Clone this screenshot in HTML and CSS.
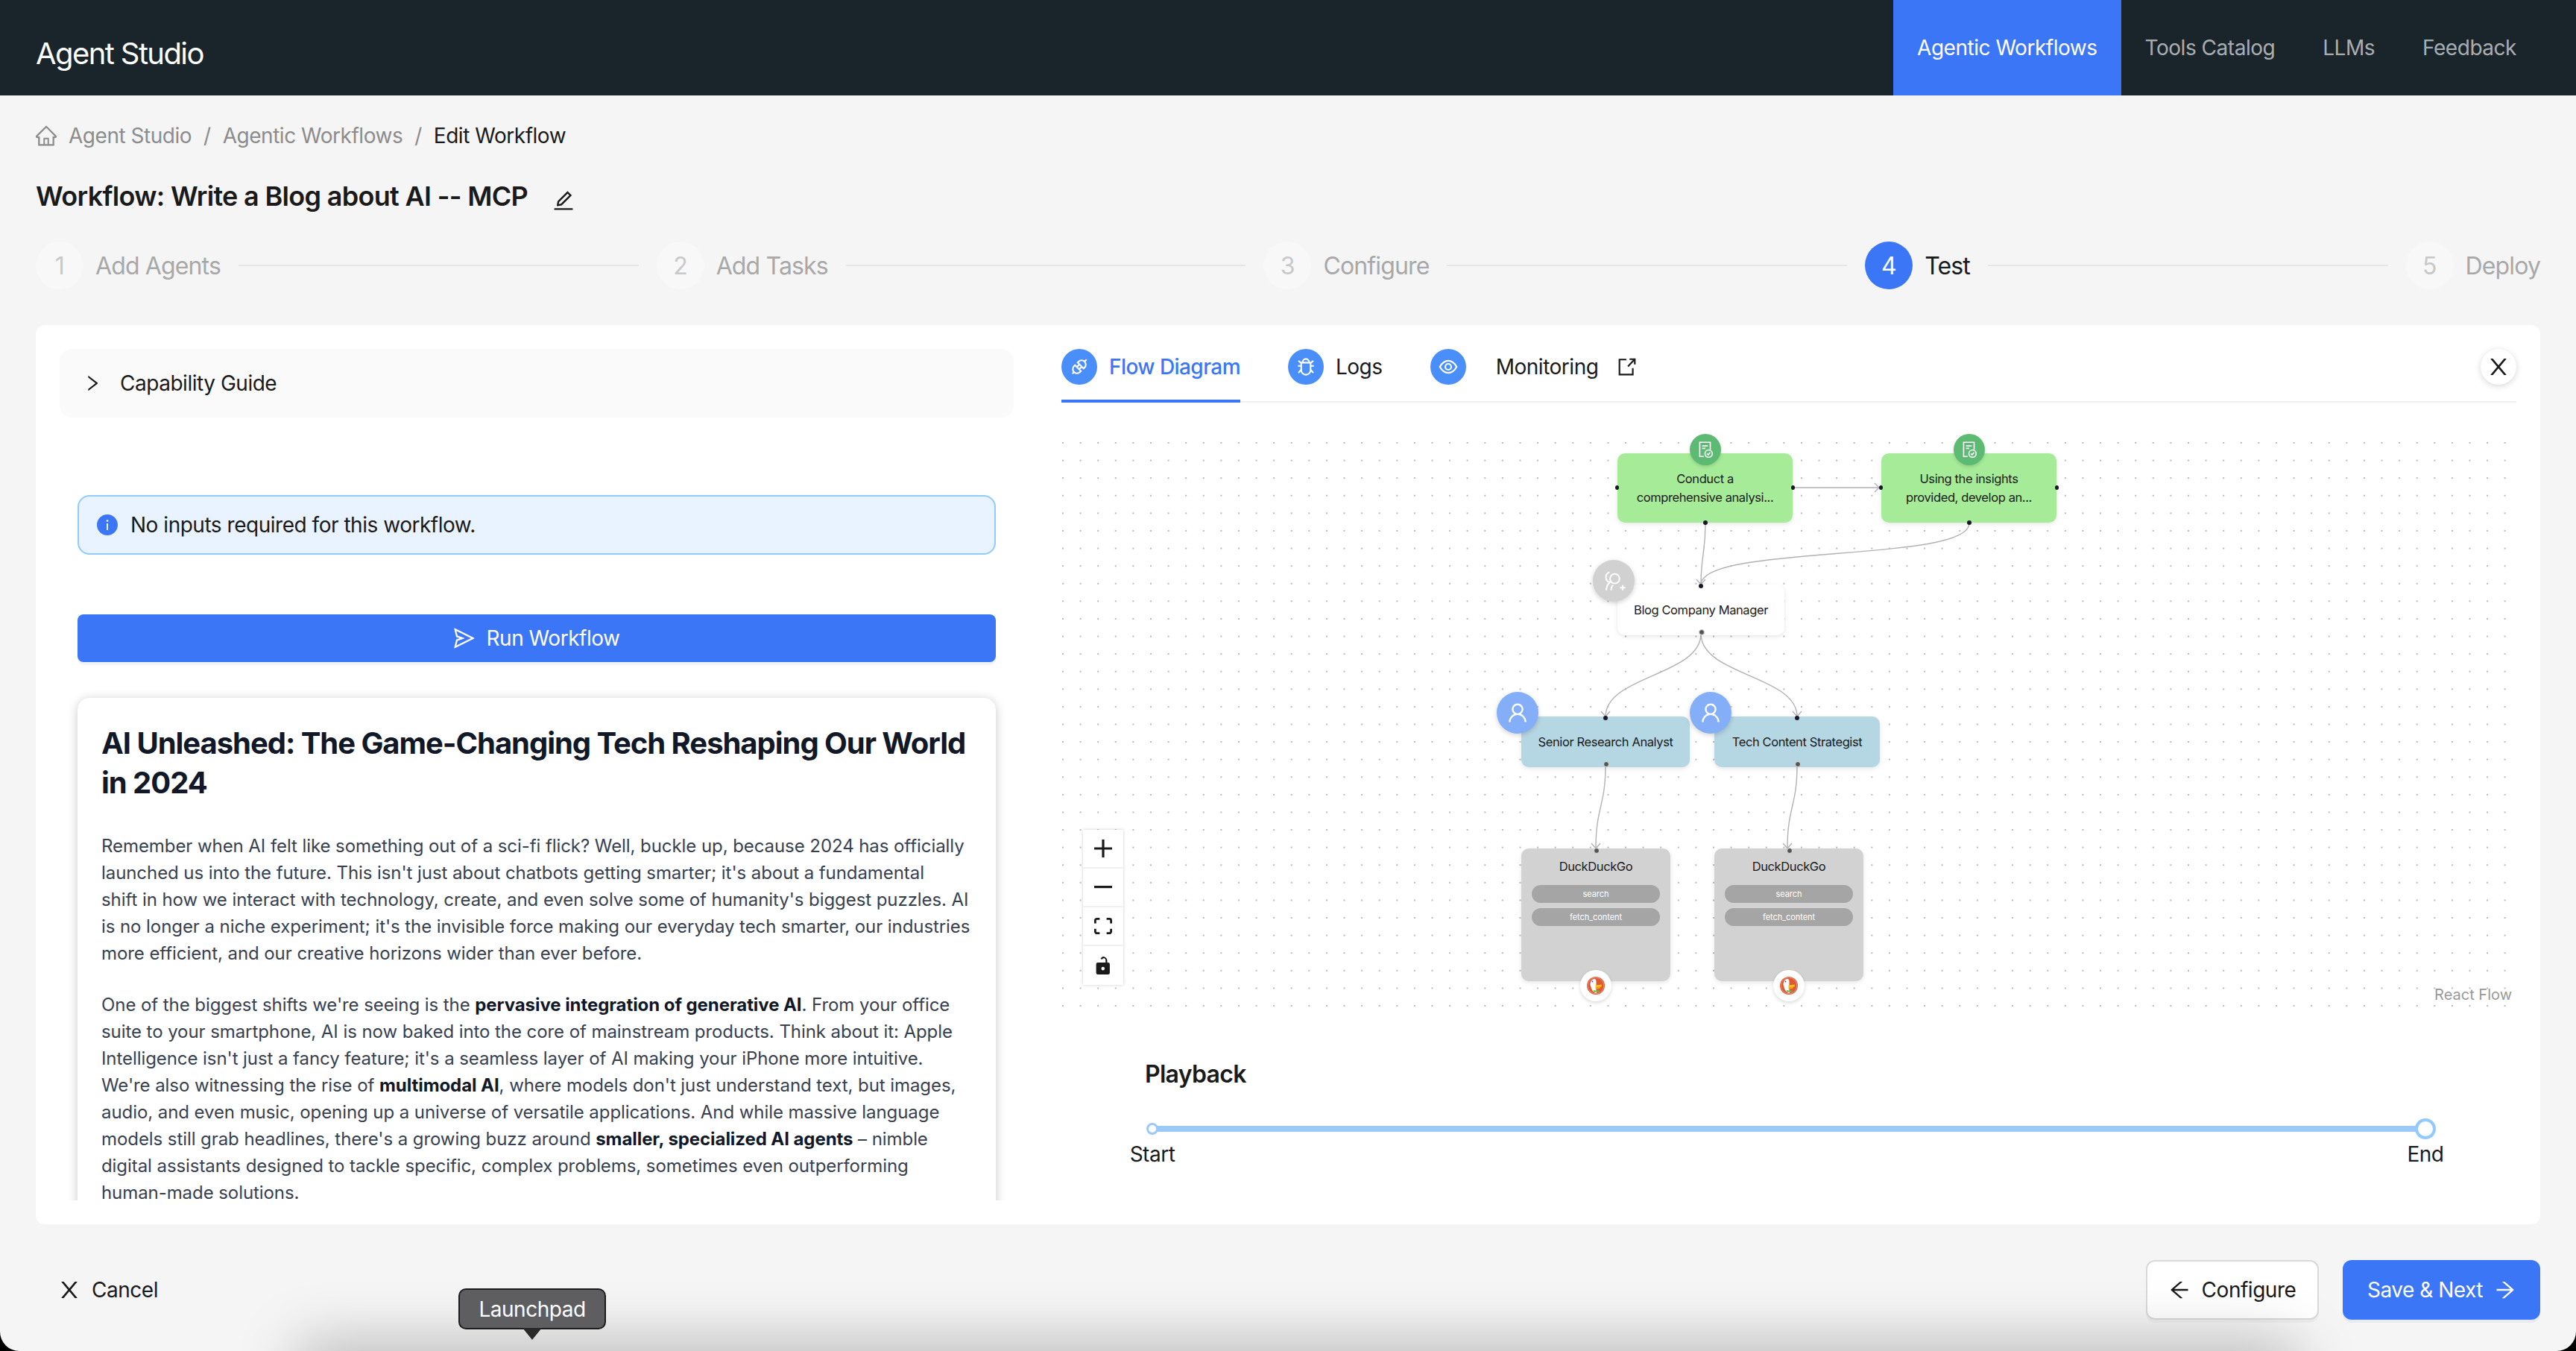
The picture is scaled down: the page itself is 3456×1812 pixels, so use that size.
FILE: index.html
```html
<!DOCTYPE html>
<html lang="en">
<head>
  <meta charset="UTF-8" />
  <title>Agent Studio</title>
  <link rel="stylesheet" href="styles.css">
</head>
<body>
  <header class="topbar">
    <div class="brand">Agent Studio</div>
    <nav class="topnav">
      <a class="topnav-item active">Agentic Workflows</a>
      <a class="topnav-item">Tools Catalog</a>
      <a class="topnav-item">LLMs</a>
      <a class="topnav-item">Feedback</a>
    </nav>
  </header>

  <main class="page">
    <div class="breadcrumb">
      <svg class="crumb-home" viewBox="64 64 896 896"><path d="M946.5 505L560.1 118.8l-25.9-25.9a31.5 31.5 0 00-44.4 0L77.5 505a63.9 63.9 0 00-18.8 46c.4 35.2 29.7 63.3 64.9 63.3h42.5V940h691.8V614.3h43.4c17.1 0 33.2-6.7 45.3-18.8a63.6 63.6 0 0018.7-45.3c0-17-6.7-33.1-18.8-45.2zM568 868H456V664h112v204zm217.9-325.7V868H632V640c0-22.1-17.9-40-40-40H432c-22.1 0-40 17.9-40 40v228H238.1V542.3h-96l370-369.7 23.1 23.1L882 542.3h-96.1z"/></svg>
      <span>Agent Studio</span>
      <span class="crumb-sep">/</span>
      <span>Agentic Workflows</span>
      <span class="crumb-sep">/</span>
      <span class="crumb-current">Edit Workflow</span>
    </div>

    <div class="title-row">
      <h1 class="page-title">Workflow: Write a Blog about AI -- MCP</h1>
      <svg class="edit-icon" viewBox="64 64 896 896"><path d="M257.7 752c2 0 4-.2 6-.5L431.9 722c2-.4 3.9-1.3 5.3-2.8l423.9-423.9a9.96 9.96 0 000-14.1L694.9 114.9c-1.9-1.9-4.4-2.9-7.1-2.9s-5.2 1-7.1 2.9L256.8 538.8c-1.5 1.5-2.4 3.3-2.8 5.3l-29.5 168.2a33.5 33.5 0 009.4 29.8c6.6 6.4 14.9 9.9 23.8 9.9zm67.4-174.4L687.8 215l73.3 73.3-362.7 362.6-88.9 15.7 15.6-89zM880 836H144c-17.7 0-32 14.3-32 32v36c0 4.4 3.6 8 8 8h784c4.4 0 8-3.6 8-8v-36c0-17.7-14.3-32-32-32z"/></svg>
    </div>

    <div class="steps">
      <div class="step"><span class="step-num">1</span><span class="step-label">Add Agents</span></div>
      <div class="step-line"></div>
      <div class="step"><span class="step-num">2</span><span class="step-label">Add Tasks</span></div>
      <div class="step-line"></div>
      <div class="step"><span class="step-num">3</span><span class="step-label">Configure</span></div>
      <div class="step-line"></div>
      <div class="step current"><span class="step-num">4</span><span class="step-label">Test</span></div>
      <div class="step-line"></div>
      <div class="step"><span class="step-num">5</span><span class="step-label">Deploy</span></div>
    </div>

    <section class="card">
      <div class="left-col">
        <div class="guide">
          <svg class="guide-arrow" viewBox="64 64 896 896"><path d="M765.7 486.8L314.9 134.7A7.97 7.97 0 00302 141v77.3c0 4.9 2.3 9.6 6.1 12.6l360 281.1-360 281.1c-3.9 3-6.1 7.7-6.1 12.6V883c0 6.7 7.7 10.4 12.9 6.3l450.8-352.1a31.96 31.96 0 000-50.4z"/></svg>
          <span>Capability Guide</span>
        </div>

        <div class="run-area">
          <div class="alert">
            <svg class="alert-icon" viewBox="64 64 896 896"><path d="M512 64C264.6 64 64 264.6 64 512s200.6 448 448 448 448-200.6 448-448S759.4 64 512 64zm32 664c0 4.4-3.6 8-8 8h-48c-4.4 0-8-3.6-8-8V456c0-4.4 3.6-8 8-8h48c4.4 0 8 3.6 8 8v272zm-32-344a48.01 48.01 0 010-96 48.01 48.01 0 010 96z"/></svg>
            <span>No inputs required for this workflow.</span>
          </div>

          <button class="run-btn">
            <svg class="run-icon" viewBox="64 64 896 896"><path d="M931.4 498.9L94.9 79.5c-3.4-1.7-7.3-2.1-11-1.2a15.99 15.99 0 00-11.7 19.3l86.2 352.2c1.3 5.3 5.2 9.6 10.4 11.3l147.7 50.7-147.6 50.7c-5.2 1.8-9.1 6-10.3 11.3L72.2 926.5c-.9 3.7-.5 7.6 1.2 10.9 3.9 7.9 13.5 11.1 21.5 7.2l836.5-417c3.1-1.5 5.6-4.1 7.2-7.1 3.9-8 .7-17.6-7.2-21.6zM170.8 826.3l50.3-205.6 295.2-101.3c2.3-.8 4.2-2.6 5-5 1.4-4.2-.8-8.7-5-10.2L221.1 403 171 198.2l628 314.9-628.2 313.2z"/></svg>
            Run Workflow
          </button>

          <article class="result">
            <h2>AI Unleashed: The Game-Changing Tech Reshaping Our World in 2024</h2>
            <p>Remember when AI felt like something out of a sci-fi flick? Well, buckle up, because 2024 has officially launched us into the future. This isn't just about chatbots getting smarter; it's about a fundamental<br>shift in how we interact with technology, create, and even solve some of humanity's biggest puzzles. AI is no longer a niche experiment; it's the invisible force making our everyday tech smarter, our industries more efficient, and our creative horizons wider than ever before.</p>
            <p>One of the biggest shifts we're seeing is the <b>pervasive integration of generative AI</b>. From your office suite to your smartphone, AI is now baked into the core of mainstream products. Think about it: Apple Intelligence isn't just a fancy feature; it's a seamless layer of AI making your iPhone more intuitive. We're also witnessing the rise of <b>multimodal AI</b>, where models don't just understand text, but images, audio, and even music, opening up a universe of versatile applications. And while massive language models still grab headlines, there's a growing buzz around <b>smaller, specialized AI agents</b> – nimble digital assistants designed to tackle specific, complex problems, sometimes even outperforming human-made solutions.</p>
          </article>
        </div>
      </div>

      <div class="right-col">
        <div class="tabs">
          <div class="tab active">
            <span class="tab-icon"><svg viewBox="0 0 24 24"><g transform="rotate(-45 12 12)"><path d="M1.500 12H5M10 7.500H8.500a4.500 4.500 0 0 0 0 9H10zM14 7.500h1.500a4.500 4.500 0 0 1 0 9H14zM20 12h3M10 10.200h4M10 13.800h4"/></g></svg></span>
            <span>Flow Diagram</span>
          </div>
          <div class="tab">
            <span class="tab-icon"><svg viewBox="0 0 24 24"><path d="M8.500 7.500V7a3.500 3.500 0 0 1 7 0v.5M7 7.500h10v8a5 5 0 0 1-10 0zM7 11H3.500M17 11h3.500M7 8l-3-2.500M17 8l3-2.500M7 15l-3 3.500M17 15l3 3.500M7 7.500h10"/></svg></span>
            <span>Logs</span>
          </div>
          <div class="tab tab-monitor">
            <span class="tab-icon"><svg viewBox="0 0 24 24"><path d="M3 12c2.400-4.300 5.400-6.500 9-6.500s6.600 2.200 9 6.500c-2.400 4.300-5.400 6.500-9 6.500S5.400 16.300 3 12z"/><circle cx="12" cy="12" r="3.200"/></svg></span>
            <span class="tab-text">Monitoring</span>
            <svg class="tab-export" viewBox="0 0 24 24"><path d="M19 13.500V21.500H2.500V3H11M13 11.500L21 3M15 2.500h6.500V9" /></svg>
          </div>
          <button class="close-btn"><svg viewBox="64 64 896 896"><path d="M563.8 512l262.5-312.9c4.400-5.200.7-13.100-6.100-13.100h-79.800c-4.700 0-9.200 2.100-12.300 5.700L511.600 449.800 295.100 191.700c-3-3.600-7.500-5.700-12.300-5.700H203c-6.800 0-10.500 7.900-6.100 13.100L459.400 512 196.900 824.900A7.950 7.950 0 00203 838h79.800c4.700 0 9.200-2.100 12.300-5.700l216.500-258.100 216.500 258.100c3 3.600 7.500 5.700 12.300 5.700h79.800c6.800 0 10.500-7.900 6.100-13.100L563.800 512z"/></svg></button>
        </div>

        <div class="canvas">
          <svg class="edges" viewBox="0 0 1952 772">
            <path d="M864 122C864 164 858 164 858 204"/>
            <path d="M1218 122C1218 175 858 150 858 204"/>
            <path d="M983 74L1097 74"/>
            <path d="M858 270C858 326 730 326 730 381"/>
            <path d="M858 270C858 326 987 326 987 381"/>
            <path d="M730 446C730 502 717 502 717 558"/>
            <path d="M987 446C987 502 974 502 974 558"/>
            <path d="M852 197L858 204L864 197"/>
            <path d="M1091 68L1097 74L1091 80"/>
            <path d="M724 374L730 381L736 374"/>
            <path d="M981 374L987 381L993 374"/>
            <path d="M711 551L717 558L723 551"/>
            <path d="M968 551L974 558L980 551"/>
          </svg>

          <div class="node task task-1">
            <span class="task-badge"><svg viewBox="0 0 24 24"><path d="M10 20.500H5V3h13v9M8 7.500h7M8 10.500h4"/><circle cx="16" cy="17" r="4.500"/><path d="M14 17l1.500 1.500 2.500-3"/></svg></span>
            <div>Conduct a</div>
            <div>comprehensive analysi...</div>
            <span class="handle h-left"></span>
            <span class="handle h-right"></span>
            <span class="handle h-bottom"></span>
          </div>
          <div class="node task task-2">
            <span class="task-badge"><svg viewBox="0 0 24 24"><path d="M10 20.500H5V3h13v9M8 7.500h7M8 10.500h4"/><circle cx="16" cy="17" r="4.500"/><path d="M14 17l1.500 1.500 2.500-3"/></svg></span>
            <div>Using the insights</div>
            <div>provided, develop an...</div>
            <span class="handle h-left"></span>
            <span class="handle h-right"></span>
            <span class="handle h-bottom"></span>
          </div>

          <div class="node agent manager">
            <span class="agent-badge badge-grey"><svg viewBox="0 0 24 24"><path d="M9 13.500a5 5 0 0 1-1-9.700M5 21c0-3 .8-5.500 3-7"/><circle cx="13" cy="10" r="4.500"/><path d="M9.500 21c0-2.300.7-4 2-5M18 18.500h5M20.500 16v5"/></svg></span>
            Blog Company Manager
            <span class="handle h-top"></span>
            <span class="handle h-bottom soft"></span>
          </div>
          <div class="node agent senior">
            <span class="agent-badge"><svg viewBox="64 64 896 896"><path d="M858.500 763.600a374 374 0 00-80.600-119.500 375.630 375.630 0 00-119.500-80.600c-.4-.2-.8-.3-1.200-.5C719.500 518 760 444.700 760 362c0-137-111-248-248-248S264 225 264 362c0 82.700 40.500 156 102.800 201.100-.4.2-.8.3-1.200.5-44.800 18.900-85 46-119.500 80.600a375.630 375.630 0 00-80.600 119.500A371.700 371.700 0 00136 901.800a8 8 0 008 8.200h60c4.400 0 7.900-3.500 8-7.800 2-77.200 33-149.500 87.800-204.300 56.700-56.700 132-87.900 212.200-87.900s155.500 31.200 212.200 87.900C779 752.700 810 825 812 902.200c.1 4.400 3.600 7.800 8 7.800h60a8 8 0 008-8.200c-1-47.800-10.900-94.300-29.500-138.200zM512 534c-45.900 0-89.100-17.900-121.600-50.400S340 407.900 340 362c0-45.900 17.900-89.100 50.400-121.600S466.100 190 512 190s89.100 17.900 121.600 50.400S684 316.100 684 362c0 45.900-17.900 89.100-50.400 121.600S557.900 534 512 534z"/></svg></span>
            Senior Research Analyst
            <span class="handle h-top"></span>
            <span class="handle h-bottom soft"></span>
          </div>
          <div class="node agent tech">
            <span class="agent-badge"><svg viewBox="64 64 896 896"><path d="M858.500 763.600a374 374 0 00-80.600-119.500 375.630 375.630 0 00-119.500-80.600c-.4-.2-.8-.3-1.200-.5C719.500 518 760 444.700 760 362c0-137-111-248-248-248S264 225 264 362c0 82.700 40.500 156 102.800 201.100-.4.2-.8.3-1.200.5-44.800 18.900-85 46-119.500 80.600a375.630 375.630 0 00-80.600 119.500A371.700 371.700 0 00136 901.800a8 8 0 008 8.200h60c4.400 0 7.900-3.500 8-7.800 2-77.200 33-149.500 87.800-204.300 56.700-56.700 132-87.900 212.200-87.900s155.500 31.200 212.200 87.900C779 752.700 810 825 812 902.200c.1 4.400 3.600 7.800 8 7.800h60a8 8 0 008-8.200c-1-47.800-10.900-94.300-29.500-138.200zM512 534c-45.900 0-89.100-17.900-121.600-50.400S340 407.900 340 362c0-45.900 17.900-89.100 50.400-121.600S466.100 190 512 190s89.100 17.900 121.600 50.400S684 316.100 684 362c0 45.900-17.900 89.100-50.400 121.600S557.900 534 512 534z"/></svg></span>
            Tech Content Strategist
            <span class="handle h-top"></span>
            <span class="handle h-bottom soft"></span>
          </div>

          <div class="node tool tool-1">
            <div class="tool-name">DuckDuckGo</div>
            <div class="tool-pill">search</div>
            <div class="tool-pill">fetch_content</div>
            <span class="tool-logo">
              <svg viewBox="0 0 24 24"><circle cx="12" cy="12" r="12" fill="#de5833"/><circle cx="12" cy="12" r="10.800" fill="none" stroke="#f2b9a6" stroke-width=".6"/><path d="M4.500 11C4.500 6 7 3 10 3c1.500 0 2.500 1 2.500 3v12l.5 4c-4 0-7-5-7.500-8z" fill="#fff"/><circle cx="7.500" cy="6.500" r=".9" fill="#2d4f8e"/><path d="M11.500 11.500L20 10.500l-.5 3-8 1z" fill="#fdc20a"/><path d="M11.500 14.500l6.500-.8-1 2.300-5.500.5z" fill="#f6a21d"/><path d="M9 18l3.500.8 4-.9V21l-4-.8L9 21z" fill="#65bc46"/></svg>
            </span>
            <span class="handle h-top soft"></span>
          </div>
          <div class="node tool tool-2">
            <div class="tool-name">DuckDuckGo</div>
            <div class="tool-pill">search</div>
            <div class="tool-pill">fetch_content</div>
            <span class="tool-logo">
              <svg viewBox="0 0 24 24"><circle cx="12" cy="12" r="12" fill="#de5833"/><circle cx="12" cy="12" r="10.800" fill="none" stroke="#f2b9a6" stroke-width=".6"/><path d="M4.500 11C4.500 6 7 3 10 3c1.500 0 2.500 1 2.500 3v12l.5 4c-4 0-7-5-7.500-8z" fill="#fff"/><circle cx="7.500" cy="6.500" r=".9" fill="#2d4f8e"/><path d="M11.500 11.500L20 10.500l-.5 3-8 1z" fill="#fdc20a"/><path d="M11.500 14.500l6.500-.8-1 2.300-5.500.5z" fill="#f6a21d"/><path d="M9 18l3.500.8 4-.9V21l-4-.8L9 21z" fill="#65bc46"/></svg>
            </span>
            <span class="handle h-top soft"></span>
          </div>

          <div class="controls">
            <button class="control"><svg viewBox="0 0 32 32"><path d="M32 18.133H18.133V32h-4.266V18.133H0v-4.266h13.867V0h4.266v13.867H32z"/></svg></button>
            <button class="control"><svg viewBox="0 0 32 5"><path d="M0 0h32v4.200H0z"/></svg></button>
            <button class="control"><svg viewBox="0 0 32 30"><path d="M3.692 4.630c0-.53.4-.938.939-.938h5.215V0H4.708C2.110 0 0 2.054 0 4.630v5.216h3.692V4.631zM27.354 0h-5.200v3.692h5.170c.53 0 .984.4.984.939v5.215H32V4.631A4.624 4.624 0 0027.354 0zm.954 24.830c0 .532-.4.94-.939.94h-5.215v3.768h5.215c2.577 0 4.631-2.130 4.631-4.707v-5.139h-3.692v5.139zm-23.677.94c-.531 0-.939-.4-.939-.94v-5.138H0v5.139c0 2.577 2.130 4.707 4.708 4.707h5.138V25.770H4.631z"/></svg></button>
            <button class="control"><svg viewBox="0 0 25 32"><path d="M21.333 10.667H19.810V7.619C19.810 3.429 16.381 0 12.190 0c-4.114 1.828-3.657 3.429-3.657 4.571h2.970c0-1.219 1.143-1.523 2.286-1.523 2.514 0 3.048 2.057 3.048 4.571v3.048H3.048A3.056 3.056 0 000 13.714v15.238A3.056 3.056 0 003.048 32h18.285a3.056 3.056 0 003.048-3.048V13.714a3.056 3.056 0 00-3.048-3.047zM12.190 24.533a3.056 3.056 0 01-3.047-3.048 3.056 3.056 0 013.047-3.047 3.056 3.056 0 013.048 3.047 3.056 3.056 0 01-3.048 3.048z"/></svg></button>
          </div>
          <div class="attribution">React Flow</div>
        </div>

        <div class="playback">
          <div class="playback-title">Playback</div>
          <div class="slider">
            <div class="slider-track"></div>
            <span class="slider-dot"></span>
            <span class="slider-handle"></span>
            <span class="slider-mark mark-start">Start</span>
            <span class="slider-mark mark-end">End</span>
          </div>
        </div>
      </div>
    </section>

    <footer class="actions">
      <button class="cancel-btn">
        <svg viewBox="64 64 896 896"><path d="M563.800 512l262.500-312.900c4.400-5.200.7-13.100-6.100-13.100h-79.800c-4.700 0-9.200 2.100-12.300 5.700L511.600 449.800 295.100 191.700c-3-3.600-7.500-5.700-12.300-5.700H203c-6.800 0-10.500 7.900-6.100 13.100L459.400 512 196.900 824.900A7.950 7.950 0 00203 838h79.800c4.700 0 9.200-2.100 12.300-5.700l216.500-258.100 216.500 258.100c3 3.600 7.500 5.700 12.300 5.700h79.800c6.800 0 10.500-7.900 6.100-13.100L563.800 512z"/></svg>
        Cancel
      </button>
      <div class="actions-right">
        <button class="btn-back">
          <svg viewBox="64 64 896 896"><path d="M872 474H286.900l350.200-304c5.600-4.900 2.200-14-5.200-14h-88.500c-3.900 0-7.600 1.400-10.500 3.900L155 487.800a31.960 31.960 0 000 48.300L535.100 866c1.500 1.300 3.300 2 5.200 2h91.500c7.400 0 10.800-9.200 5.200-14L286.900 550H872c4.400 0 8-3.600 8-8v-60c0-4.400-3.600-8-8-8z"/></svg>
          Configure
        </button>
        <button class="btn-next">
          Save &amp; Next
          <svg viewBox="64 64 896 896"><path d="M869 487.800L491.200 159.900c-2.900-2.500-6.600-3.900-10.500-3.900h-88.500c-7.400 0-10.800 9.200-5.200 14l350.200 304H152c-4.400 0-8 3.600-8 8v60c0 4.400 3.600 8 8 8h585.100L386.900 854c-5.600 4.900-2.200 14 5.200 14h91.500c1.900 0 3.800-.7 5.200-2L869 536.200a32.070 32.070 0 000-48.400z"/></svg>
        </button>
      </div>
    </footer>
  </main>

  <!-- desktop bits that sit over the browser window -->
  <div class="dock-shadow"></div>
  <div class="launchpad-tip">Launchpad</div>
  <div class="window-corners"></div>
</body>
</html>
```

FILE: styles.css
```css
* {
  box-sizing: border-box;
  letter-spacing: -0.017em;
}

html, body {
  height: 100%;
}

body {
  margin: 0;
  height: 1812px;
  overflow: hidden;
  background: #f5f5f5;
  color: #1a1a1a;
  font-family: Inter, "Liberation Sans", sans-serif;
  font-size: 28px;
  position: relative;
}

button {
  font-family: inherit;
  font-size: 28px;
  border: none;
  cursor: pointer;
}

svg {
  display: block;
  fill: currentColor;
}

/* top bar */
.topbar {
  height: 128px;
  background: #19242b;
  display: flex;
  justify-content: space-between;
  padding-left: 48px;
  padding-right: 48px;
}

.brand {
  color: #fff;
  font-size: 40px;
  letter-spacing: -0.04em;
  line-height: 144px;
}

.topnav {
  display: flex;
}

.topnav-item {
  padding: 0 32px;
  line-height: 128px;
  color: rgba(255,255,255,0.65);
}

.topnav-item.active {
  background: #3b76f7;
  color: #fff;
}

/* page */
.page {
  padding: 0 48px;
}

.breadcrumb {
  display: flex;
  align-items: center;
  height: 108px;
  color: #8c8c8c;
}

.crumb-home {
  width: 28px;
  height: 28px;
  margin-right: 16px;
}

.crumb-sep {
  margin: 0 16px;
}

.crumb-current {
  color: #1a1a1a;
}

.title-row {
  display: flex;
  align-items: center;
  height: 54px;
}

.page-title {
  margin: 0;
  font-size: 36px;
  font-weight: 600;
  letter-spacing: -0.019em;
}

.edit-icon {
  width: 28px;
  height: 28px;
  margin-left: 34px;
  margin-top: 12px;
}

/* steps */
.steps {
  display: flex;
  align-items: center;
  gap: 24px;
  margin-top: 34px;
  height: 64px;
}

.step {
  display: flex;
  align-items: center;
  gap: 16px;
  font-size: 32px;
  color: #a8a8a8;
}

.step-label {
  letter-spacing: -0.027em;
}

.step-num {
  width: 64px;
  height: 64px;
  border-radius: 50%;
  background: #f8f8f8;
  color: #c8c8c8;
  display: flex;
  align-items: center;
  justify-content: center;
}

.step.current {
  color: #1a1a1a;
}

.step.current .step-num {
  background: #3b76f7;
  color: #fff;
}

.step-line {
  flex: 1;
  height: 2px;
  background: #e6e6e6;
}

/* main card */
.card {
  margin-top: 48px;
  height: 1206px;
  background: #fff;
  border-radius: 12px;
  padding: 32px;
  display: flex;
  gap: 64px;
}

.left-col {
  width: 1280px;
  flex: none;
  height: 1142px;
  overflow: hidden;
}

.guide {
  height: 92px;
  background: #fafafa;
  border-radius: 16px;
  display: flex;
  align-items: center;
  padding-left: 32px;
  gap: 25px;
}

.guide-arrow {
  width: 24px;
  height: 24px;
}

.run-area {
  padding: 0 24px;
}

.alert {
  margin-top: 104px;
  height: 80px;
  background: #e9f3ff;
  border: 2px solid #91caff;
  border-radius: 16px;
  display: flex;
  align-items: center;
  padding-left: 24px;
  gap: 17px;
}

.alert-icon {
  width: 28px;
  height: 28px;
  color: #3b76f7;
}

.run-btn {
  margin-top: 80px;
  width: 100%;
  height: 64px;
  background: #3b76f7;
  color: #fff;
  border-radius: 8px;
  display: flex;
  align-items: center;
  justify-content: center;
  gap: 16px;
  box-shadow: 0 4px 0 rgba(59,118,247,0.08);
}

.run-icon {
  width: 28px;
  height: 28px;
}

.result {
  margin-top: 48px;
  background: #fff;
  border-radius: 16px;
  padding: 34px 28px 34px 32px;
  box-shadow: 0 2px 14px rgba(0,0,0,0.22);
}

.result h2 {
  margin: 0 0 41px;
  font-size: 40px;
  line-height: 53px;
  font-weight: 700;
  letter-spacing: -0.026em;
  color: #111827;
}

.result p {
  margin: 0 0 33px;
  font-size: 24px;
  line-height: 36px;
  letter-spacing: -0.003em;
  color: #374151;
}

.result b {
  color: #111827;
  font-weight: 700;
  letter-spacing: -0.003em;
}

/* right side */
.right-col {
  flex: 1;
  min-width: 0;
}

.tabs {
  height: 72px;
  display: flex;
  gap: 64px;
  border-bottom: 2px solid #f0f0f0;
  position: relative;
}

.tab {
  display: flex;
  align-items: center;
  gap: 16px;
  height: 72px;
  padding-bottom: 24px;
}

.tab.active {
  color: #3b76f7;
  font-weight: 500;
  border-bottom: 4px solid #3b76f7;
  padding-bottom: 20px;
}

.tab.active span {
  letter-spacing: -0.02em;
}

.tab-icon {
  width: 48px;
  height: 48px;
  border-radius: 50%;
  background: #4a8ff9;
  color: #fff;
  display: flex;
  align-items: center;
  justify-content: center;
}

.tab-icon svg {
  width: 30px;
  height: 30px;
  fill: none;
  stroke: #fff;
  stroke-width: 1.7;
}

.tab-monitor .tab-text {
  margin-left: 24px;
}

.tab-export {
  width: 26px;
  height: 26px;
  margin-left: 10px;
  fill: none;
  stroke: #1a1a1a;
  stroke-width: 2;
}

.close-btn {
  position: absolute;
  right: 0;
  top: 0;
  width: 48px;
  height: 48px;
  border-radius: 50%;
  background: #fff;
  color: #1a1a1a;
  padding: 0;
  display: flex;
  align-items: center;
  justify-content: center;
  box-shadow: 0 2px 8px rgba(0,0,0,0.16);
}

.close-btn svg {
  width: 30px;
  height: 30px;
}

/* flow diagram */
.canvas {
  position: relative;
  margin-top: 40px;
  height: 772px;
  background-image: radial-gradient(circle, #b8b8bd 0.7px, transparent 1.1px);
  background-size: 23.6px 23.6px;
  background-position: -9.8px 2.2px;
}

.edges {
  position: absolute;
  left: 0;
  top: 0;
  width: 1952px;
  height: 772px;
  fill: none;
  stroke: #b1b1b7;
  stroke-width: 1.4;
}

.node {
  position: absolute;
  border-radius: 10px;
  font-size: 16.5px;
  letter-spacing: -0.024em;
  color: #1a1a1a;
  text-align: center;
  box-shadow: 0 2px 6px rgba(0,0,0,0.1);
}

.node div {
  letter-spacing: -0.024em;
}

.handle {
  position: absolute;
  width: 6px;
  height: 6px;
  border-radius: 50%;
  background: #1a192b;
}

.handle.soft {
  background: #555;
  border: 1px solid #ddd;
  width: 8px;
  height: 8px;
}

.h-top { left: 50%; top: -1px; margin-left: -3px; }
.h-bottom { left: 50%; bottom: -3px; margin-left: -3px; }
.h-left { left: -3px; top: 43px; width: 5px; }
.h-right { right: -3px; top: 43px; width: 5px; }
.agent .h-bottom { bottom: 0; }
.agent .h-top { top: -1px; }

.task {
  top: 28px;
  width: 235px;
  height: 93px;
  background: #a6ec98;
  padding-top: 22px;
  line-height: 25px;
}

.task-1 { left: 746px; }
.task-2 { left: 1100px; }

.task-badge {
  position: absolute;
  left: 50%;
  top: -26px;
  margin-left: -21px;
  width: 42px;
  height: 42px;
  border-radius: 50%;
  background: #5dba72;
  display: flex;
  align-items: center;
  justify-content: center;
  box-shadow: 0 2px 5px rgba(0,0,0,0.15);
}

.task-badge svg {
  width: 26px;
  height: 26px;
  fill: none;
  stroke: #fff;
  stroke-width: 1.5;
}

.agent {
  height: 68px;
  display: flex;
  align-items: center;
  justify-content: center;
}

.manager {
  left: 746px;
  top: 204px;
  width: 224px;
  background: #fff;
}

.senior {
  left: 617px;
  top: 381px;
  width: 226px;
  background: #b5d6e3;
}

.tech {
  left: 876px;
  top: 381px;
  width: 222px;
  background: #b5d6e3;
}

.agent-badge {
  position: absolute;
  left: -33px;
  top: -33px;
  width: 56px;
  height: 56px;
  border-radius: 50%;
  background: #84aff8;
  color: #fff;
  display: flex;
  align-items: center;
  justify-content: center;
  box-shadow: 0 2px 6px rgba(0,0,0,0.18);
}

.agent-badge svg {
  width: 28px;
  height: 28px;
}

.badge-grey {
  background: #d1d1d1;
}

.badge-grey svg {
  width: 34px;
  height: 34px;
  fill: none;
  stroke: #fff;
  stroke-width: 1.4;
}

.tool {
  top: 558px;
  width: 200px;
  height: 178px;
  background: #d2d2d2;
  padding: 12px 14px 0;
}

.tool-1 { left: 617px; }
.tool-2 { left: 876px; }

.tool-name {
  line-height: 24px;
  margin-bottom: 13px;
}

.tool-pill {
  height: 24px;
  line-height: 24px;
  border-radius: 12px;
  background: #a5a5a5;
  color: #fff;
  font-size: 11px;
  margin-bottom: 7px;
}

.node .tool-pill {
  letter-spacing: -0.005em;
}

.tool-logo {
  position: absolute;
  left: 50%;
  bottom: -27px;
  margin-left: -21px;
  width: 42px;
  height: 42px;
  border-radius: 50%;
  background: #fff;
  display: flex;
  align-items: center;
  justify-content: center;
  box-shadow: 0 2px 5px rgba(0,0,0,0.15);
}

.tool-logo svg {
  width: 24px;
  height: 24px;
}

.controls {
  position: absolute;
  left: 29px;
  top: 533px;
  width: 54px;
  box-shadow: 0 0 4px rgba(0,0,0,0.2);
}

.control {
  width: 54px;
  height: 52px;
  padding: 0;
  background: #fff;
  border-bottom: 2px solid #f0f0f0;
  color: #1a1a1a;
  display: flex;
  align-items: center;
  justify-content: center;
}

.control svg {
  width: 24px;
  max-height: 24px;
}

.control:last-child {
  border-bottom: none;
}

.attribution {
  position: absolute;
  right: 6px;
  bottom: 6px;
  font-size: 20px;
  letter-spacing: 0;
  color: #999;
}

/* playback slider */
.playback {
  padding-top: 65px;
}

.playback-title {
  margin-left: 112px;
  font-size: 32px;
  line-height: 48px;
  font-weight: 600;
  letter-spacing: -0.022em;
}

.slider {
  position: relative;
  margin: 35px 0 0 120px;
  width: 1710px;
  height: 28px;
}

.slider-track {
  position: absolute;
  left: 0;
  right: 0;
  top: 10px;
  height: 8px;
  background: #9dc8fa;
}

.slider-dot {
  position: absolute;
  left: -6px;
  top: 6px;
  width: 16px;
  height: 16px;
  border-radius: 50%;
  background: #fff;
  border: 3px solid #9dc8fa;
}

.slider-handle {
  position: absolute;
  right: -14px;
  top: 0;
  width: 28px;
  height: 28px;
  border-radius: 50%;
  background: #fff;
  border: 4px solid #91caff;
}

.slider-mark {
  position: absolute;
  top: 31px;
  line-height: 34px;
  transform: translateX(-50%);
}

.mark-start { left: 2px; }
.mark-end { left: 100%; }

/* footer buttons */
.actions {
  display: flex;
  justify-content: space-between;
  align-items: center;
  margin-top: 48px;
  height: 80px;
}

.cancel-btn {
  background: none;
  color: #1a1a1a;
  padding: 0 0 0 30px;
  display: flex;
  align-items: center;
  gap: 15px;
}

.cancel-btn svg {
  width: 30px;
  height: 30px;
}

.actions-right {
  display: flex;
  gap: 32px;
}

.btn-back,
.btn-next {
  height: 80px;
  border-radius: 12px;
  display: flex;
  align-items: center;
  justify-content: center;
  gap: 16px;
}

.btn-back svg,
.btn-next svg {
  width: 28px;
  height: 28px;
}

.btn-back {
  width: 232px;
  background: #fff;
  border: 2px solid #d9d9d9;
  color: #1a1a1a;
  box-shadow: 0 4px 0 rgba(0,0,0,0.03);
}

.btn-next {
  width: 265px;
  background: #3b76f7;
  color: #fff;
  box-shadow: 0 4px 0 rgba(59,118,247,0.08);
}

/* desktop overlays */
.dock-shadow {
  position: absolute;
  left: 410px;
  width: 2660px;
  bottom: -60px;
  height: 60px;
  box-shadow: 0 0 80px 10px rgba(0,0,0,0.26);
}

.launchpad-tip {
  position: absolute;
  left: 615px;
  top: 1728px;
  width: 198px;
  height: 55px;
  border-radius: 10px;
  background: #5e5e60;
  border: 2px solid #1c1c1c;
  color: #fff;
  text-align: center;
  line-height: 52px;
}

.launchpad-tip::after {
  content: "";
  position: absolute;
  left: 84px;
  top: 51px;
  border-left: 13px solid transparent;
  border-right: 13px solid transparent;
  border-top: 16px solid #2a2a2a;
}

.window-corners {
  position: absolute;
  left: 0;
  top: 0;
  right: 0;
  bottom: 0;
  border-radius: 0 0 26px 26px;
  box-shadow: 0 0 0 30px #000;
  pointer-events: none;
}
```
